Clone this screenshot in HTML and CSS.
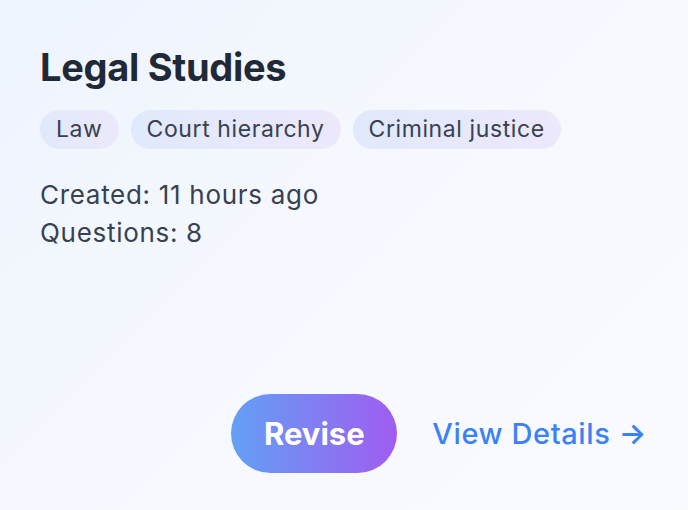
FILE: index.html
```html
<!DOCTYPE html>
<html lang="en">
<head>
<meta charset="utf-8">
<title>Legal Studies</title>
<link rel="stylesheet" href="styles.css">
</head>
<body>
<main class="card">
  <h1 class="title">Legal Studies</h1>
  <ul class="tags">
    <li class="tag">Law</li>
    <li class="tag">Court hierarchy</li>
    <li class="tag">Criminal justice</li>
  </ul>
  <div class="meta">
    <p>Created: 11 hours ago</p>
    <p>Questions: 8</p>
  </div>
  <div class="actions">
    <button class="revise" type="button">Revise</button>
    <a class="details" href="#">View Details <span class="arrow">→</span></a>
  </div>
</main>
</body>
</html>
```

FILE: styles.css
```css
* { box-sizing: border-box; }
html, body { margin: 0; padding: 0; height: 100%; }
body {
  font-family: Inter, "Noto Sans", "Liberation Sans", sans-serif;
  background: linear-gradient(135deg, #eef4fd 0%, #f5f8fe 45%, #fafbff 100%);
}
.card {
  height: 100%;
  display: flex;
  flex-direction: column;
  padding: 44px 41px 37px 40px;
}
.title {
  margin: 0;
  font-size: 38px;
  line-height: 46px;
  font-weight: 700;
  color: #1f2937;
  letter-spacing: -0.3px;
}
.tags {
  list-style: none;
  margin: 20px 0 0;
  padding: 0;
  display: flex;
  gap: 12px;
}
.tag {
  padding: 6px 16px;
  line-height: 27px;
  font-size: 23px;
  letter-spacing: 0.6px;
  color: #374151;
  border-radius: 999px;
  background: linear-gradient(90deg, #e0e9fb, #ede8fb);
}
.meta {
  margin-top: 27px;
  font-size: 26px;
  line-height: 37.5px;
  letter-spacing: 0.7px;
  color: #374151;
}
.meta p { margin: 0; }
.actions {
  margin-top: auto;
  display: flex;
  justify-content: flex-end;
  align-items: center;
  gap: 35px;
}
.revise {
  width: 166px;
  height: 79px;
  border: 0;
  border-radius: 999px;
  font-family: inherit;
  font-size: 31px;
  font-weight: 700;
  color: #fff;
  background: linear-gradient(90deg, #63a0f5, #a05cf0);
}
.details {
  font-size: 29px;
  font-weight: 500;
  letter-spacing: 0.6px;
  color: #3b82f6;
  text-decoration: none;
}
.arrow { font-weight: 600; }
```
